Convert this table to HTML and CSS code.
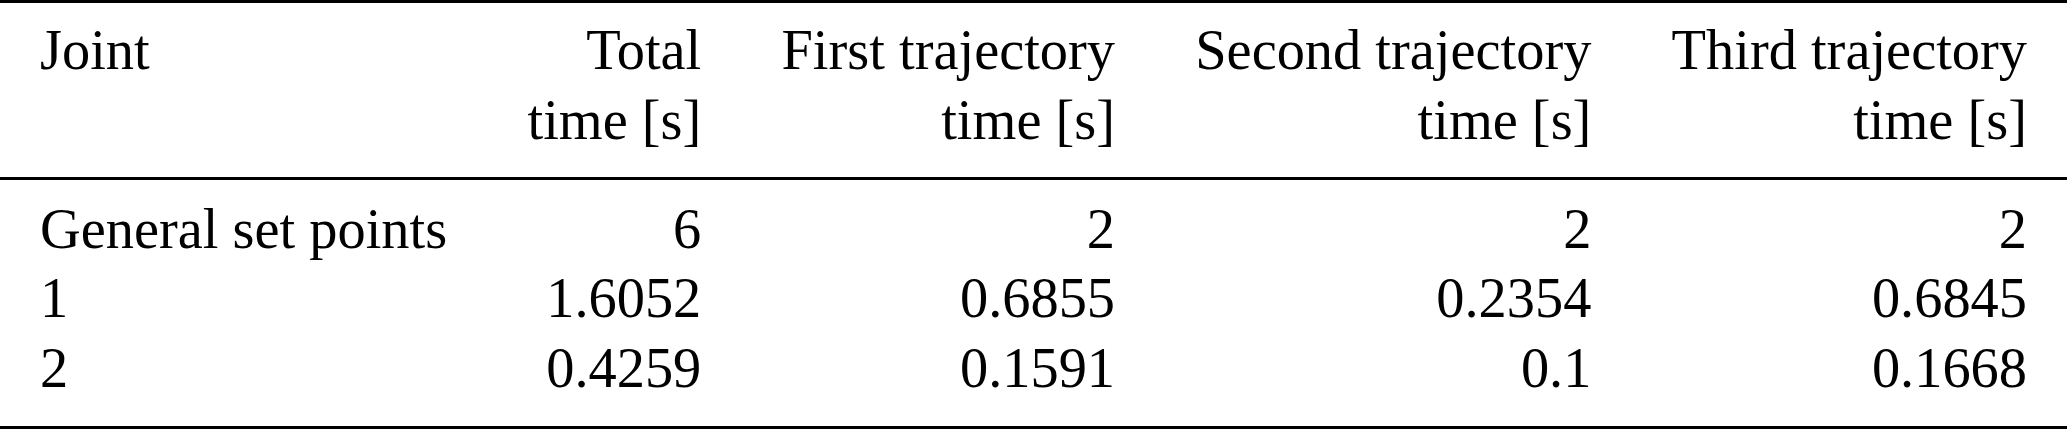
FILE: index.html
```html
<!DOCTYPE html>
<html lang="en">
<head>
    <meta charset="UTF-8">
    <meta name="viewport" content="width=device-width, initial-scale=1.0">
    <title>Trajectory times</title>
    <link rel="stylesheet" href="styles.css">
</head>
<body>
    <table class="times">
        <thead>
            <tr>
                <th class="label">Joint</th>
                <th>Total<br>time [s]</th>
                <th>First trajectory<br>time [s]</th>
                <th>Second trajectory<br>time [s]</th>
                <th>Third trajectory<br>time [s]</th>
            </tr>
        </thead>
        <tbody>
            <tr class="first">
                <td class="label">General set points</td>
                <td>6</td>
                <td>2</td>
                <td>2</td>
                <td>2</td>
            </tr>
            <tr>
                <td class="label">1</td>
                <td>1.6052</td>
                <td>0.6855</td>
                <td>0.2354</td>
                <td>0.6845</td>
            </tr>
            <tr class="last">
                <td class="label">2</td>
                <td>0.4259</td>
                <td>0.1591</td>
                <td>0.1</td>
                <td>0.1668</td>
            </tr>
        </tbody>
    </table>
</body>
</html>
```

FILE: styles.css
```css
body { margin: 0; padding: 0; background-color: #fff}
.times { width: 100%; border-collapse: collapse; font-family: "Liberation Serif", "Times New Roman", serif; font-size: 56.4px; color: #000; border-top: 3px solid #000; border-bottom: 3px solid #000}
.times th, .times td { padding: 0 40px; text-align: right; white-space: nowrap; vertical-align: top}
.times th { font-weight: normal; line-height: 70px; padding-top: 12px; padding-bottom: 22px}
.times thead tr { border-bottom: 3px solid #000}
.times td { line-height: 69.5px}
.times .first td { padding-top: 14.5px}
.times .last td { padding-bottom: 23px}
.times .label { text-align: left}
```
